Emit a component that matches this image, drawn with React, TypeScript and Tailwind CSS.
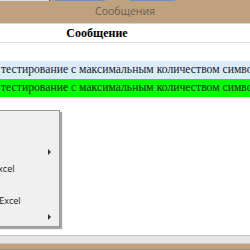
import React from "react";

export default function App() {
  const rowText = "тестирование с максимальным количеством символов";
  const arrow =
    "absolute right-[8px] top-1/2 -translate-y-1/2 w-0 h-0 border-y-[3px] border-y-transparent border-l-[3px] border-l-[#333]";
  return (
    <div className="relative w-[250px] h-[250px] overflow-hidden bg-white" style={{ fontFamily: '"Liberation Serif", serif' }}>
      {/* top strip */}
      <div className="flex h-[1px]">
        <div className="w-[49px] bg-[#d8dde6]" />
        <div className="w-[1px] bg-[#3a3f4a]" />
        <div className="w-[5px] bg-[#c0a17f]" />
        <div className="w-[50px] bg-[#6e8fc0]" />
        <div className="w-[25px] bg-[#c0a17f]" />
        <div className="w-[45px] bg-[#6e8fc0]" />
        <div className="flex-1 bg-[#c0a17f]" />
      </div>
      {/* title bar */}
      <div
        className="h-[22px] bg-[#c0a17f] flex items-center justify-center text-[10.5px] text-[#6a5f55]"
        style={{ fontFamily: '"Open Sans", sans-serif' }}
      >
        Сообщения
      </div>
      <div className="h-[1px] bg-[#d4d4d4]" />
      {/* column header */}
      <div className="h-[18px] flex items-center justify-center text-[12px] font-bold text-black pr-[56px]">
        Сообщение
      </div>
      <div className="h-[1px] bg-[#e3e3e3]" />
      {/* rows */}
      <div className="h-[18px]" />
      <div className="h-[18px] bg-[#dcebfc] flex items-center whitespace-nowrap text-[11.7px] text-[#1a1a1a] pl-[1px]">
        {rowText}
      </div>
      <div className="h-[18px] bg-[#00ff00] flex items-center whitespace-nowrap text-[11.7px] text-[#1a1a1a] pl-[1px]">
        {rowText}
      </div>

      {/* bottom scrollbar & bar */}
      <div className="absolute left-0 right-0 bottom-0 flex flex-col">
        <div className="h-[1px] bg-[#c4c4c4]" />
        <div className="h-[7px] bg-[#e6e6e6]" />
        <div className="h-[1px] bg-[#c4c4c4]" />
        <div className="h-[5px] bg-[#c0a17f]" />
        <div className="h-[1px] bg-[#a88b6a]" />
      </div>

      {/* context menu */}
      <div
        className="absolute left-[-100px] top-[110px] w-[160px] h-[117px] overflow-hidden bg-[#f0f0f0] border border-[#979797] shadow-[2px_2px_1px_rgba(0,0,0,0.35)] text-[9px] text-[#1a1a1a]"
        style={{ fontFamily: '"Open Sans", sans-serif' }}
      >
        <div className="flex flex-col">
          <div className="h-[16px] flex items-center pl-[30px]">Копировать</div>
          <div className="h-[17px] flex items-center pl-[30px]">Вставить</div>
          <div className="h-[16px] flex items-center pl-[30px] relative">
            Выделить
            <span className={arrow} />
          </div>
          <div className="h-[18px] flex items-center pl-[35px] whitespace-nowrap">Сохранить в Excel</div>
          <div className="h-[14px]" />
          <div className="h-[17px] flex items-center pl-[53px] whitespace-nowrap">Экспорт в Excel</div>
          <div className="h-[16px] flex items-center pl-[30px] relative">
            Вид
            <span className={arrow} />
          </div>
        </div>
      </div>
    </div>
  );
}
